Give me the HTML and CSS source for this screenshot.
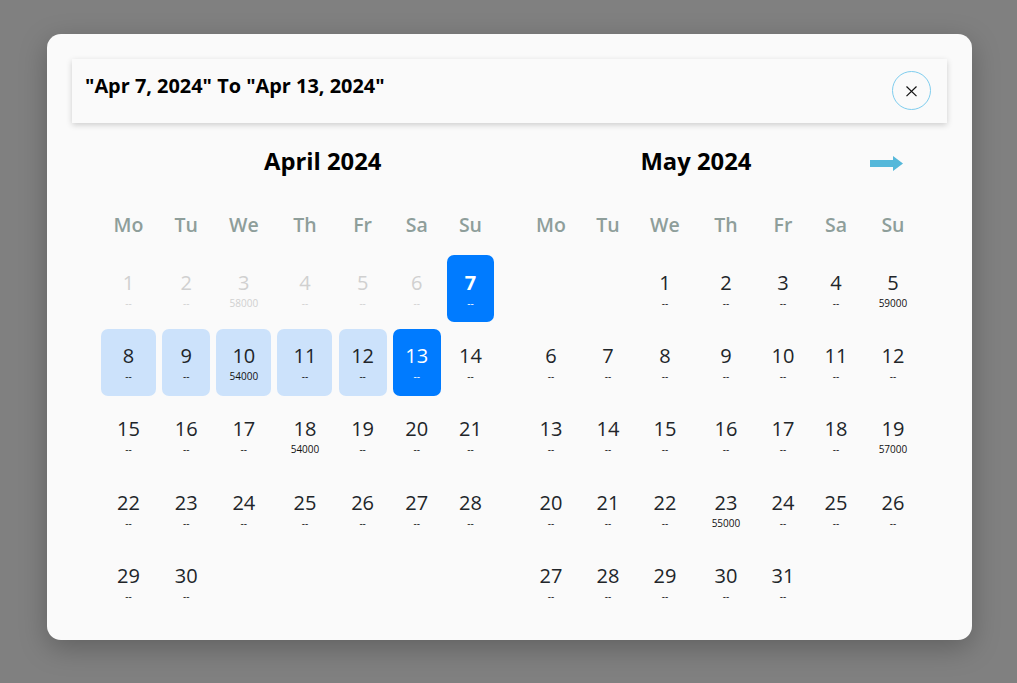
FILE: index.html
```html
<!DOCTYPE html>
<html lang="en">
  <head>
    <meta charset="UTF-8" />
    <meta name="viewport" content="width=device-width, initial-scale=1.0" />
    <title>Select dates</title>
    <link rel="stylesheet" href="styles.css">
  </head>
  <body>
    <div class="overlay">
      <div class="modal">
        <header class="modal-header">
          <h2 class="range-title">"Apr 7, 2024" To "Apr 13, 2024"</h2>
          <button class="close-btn" aria-label="Close">
            <svg width="12" height="12" viewBox="0.5 -0.3 12 12"><path d="M1 1.2 L11 10.8 M11 1.2 L1 10.8" stroke="#111" stroke-width="1.2" fill="none"/></svg>
          </button>
        </header>
        <div class="months">
          <section class="month month-left">
            <div class="month-head"><h3 class="month-title">April 2024</h3></div>
            <div class="grid">
              <div class="dow">Mo</div><div class="dow">Tu</div><div class="dow">We</div><div class="dow">Th</div><div class="dow">Fr</div><div class="dow">Sa</div><div class="dow">Su</div>

              <div class="day past"><span class="num">1</span><span class="price">--</span></div>
              <div class="day past"><span class="num">2</span><span class="price">--</span></div>
              <div class="day past"><span class="num">3</span><span class="price">58000</span></div>
              <div class="day past"><span class="num">4</span><span class="price">--</span></div>
              <div class="day past"><span class="num">5</span><span class="price">--</span></div>
              <div class="day past"><span class="num">6</span><span class="price">--</span></div>
              <div class="day start"><span class="num">7</span><span class="price">--</span></div>

              <div class="day range"><span class="num">8</span><span class="price">--</span></div>
              <div class="day range"><span class="num">9</span><span class="price">--</span></div>
              <div class="day range"><span class="num">10</span><span class="price">54000</span></div>
              <div class="day range"><span class="num">11</span><span class="price">--</span></div>
              <div class="day range"><span class="num">12</span><span class="price">--</span></div>
              <div class="day end"><span class="num">13</span><span class="price">--</span></div>
              <div class="day"><span class="num">14</span><span class="price">--</span></div>

              <div class="day"><span class="num">15</span><span class="price">--</span></div>
              <div class="day"><span class="num">16</span><span class="price">--</span></div>
              <div class="day"><span class="num">17</span><span class="price">--</span></div>
              <div class="day"><span class="num">18</span><span class="price">54000</span></div>
              <div class="day"><span class="num">19</span><span class="price">--</span></div>
              <div class="day"><span class="num">20</span><span class="price">--</span></div>
              <div class="day"><span class="num">21</span><span class="price">--</span></div>

              <div class="day"><span class="num">22</span><span class="price">--</span></div>
              <div class="day"><span class="num">23</span><span class="price">--</span></div>
              <div class="day"><span class="num">24</span><span class="price">--</span></div>
              <div class="day"><span class="num">25</span><span class="price">--</span></div>
              <div class="day"><span class="num">26</span><span class="price">--</span></div>
              <div class="day"><span class="num">27</span><span class="price">--</span></div>
              <div class="day"><span class="num">28</span><span class="price">--</span></div>

              <div class="day"><span class="num">29</span><span class="price">--</span></div>
              <div class="day"><span class="num">30</span><span class="price">--</span></div>
            </div>
          </section>

          <section class="month month-right">
            <div class="month-head">
              <h3 class="month-title">May 2024</h3>
              <svg class="next-arrow" width="33" height="15" viewBox="0 0 33 15"><path d="M0 4 H23 V0 L33 7.5 L23 15 V11 H0 Z" fill="#55b8da"/></svg>
            </div>
            <div class="grid">
              <div class="dow">Mo</div><div class="dow">Tu</div><div class="dow">We</div><div class="dow">Th</div><div class="dow">Fr</div><div class="dow">Sa</div><div class="dow">Su</div>

              <div class="day"></div>
              <div class="day"></div>
              <div class="day"><span class="num">1</span><span class="price">--</span></div>
              <div class="day"><span class="num">2</span><span class="price">--</span></div>
              <div class="day"><span class="num">3</span><span class="price">--</span></div>
              <div class="day"><span class="num">4</span><span class="price">--</span></div>
              <div class="day"><span class="num">5</span><span class="price">59000</span></div>

              <div class="day"><span class="num">6</span><span class="price">--</span></div>
              <div class="day"><span class="num">7</span><span class="price">--</span></div>
              <div class="day"><span class="num">8</span><span class="price">--</span></div>
              <div class="day"><span class="num">9</span><span class="price">--</span></div>
              <div class="day"><span class="num">10</span><span class="price">--</span></div>
              <div class="day"><span class="num">11</span><span class="price">--</span></div>
              <div class="day"><span class="num">12</span><span class="price">--</span></div>

              <div class="day"><span class="num">13</span><span class="price">--</span></div>
              <div class="day"><span class="num">14</span><span class="price">--</span></div>
              <div class="day"><span class="num">15</span><span class="price">--</span></div>
              <div class="day"><span class="num">16</span><span class="price">--</span></div>
              <div class="day"><span class="num">17</span><span class="price">--</span></div>
              <div class="day"><span class="num">18</span><span class="price">--</span></div>
              <div class="day"><span class="num">19</span><span class="price">57000</span></div>

              <div class="day"><span class="num">20</span><span class="price">--</span></div>
              <div class="day"><span class="num">21</span><span class="price">--</span></div>
              <div class="day"><span class="num">22</span><span class="price">--</span></div>
              <div class="day"><span class="num">23</span><span class="price">55000</span></div>
              <div class="day"><span class="num">24</span><span class="price">--</span></div>
              <div class="day"><span class="num">25</span><span class="price">--</span></div>
              <div class="day"><span class="num">26</span><span class="price">--</span></div>

              <div class="day"><span class="num">27</span><span class="price">--</span></div>
              <div class="day"><span class="num">28</span><span class="price">--</span></div>
              <div class="day"><span class="num">29</span><span class="price">--</span></div>
              <div class="day"><span class="num">30</span><span class="price">--</span></div>
              <div class="day"><span class="num">31</span><span class="price">--</span></div>
            </div>
          </section>
        </div>
      </div>
    </div>
  </body>
</html>
```

FILE: styles.css
```css
* {
  box-sizing: border-box;
}

html,
body {
  height: 100%;
}

body {
  margin: 0;
  font-family: "Open Sans", "Noto Sans", sans-serif;
  color: #212529;
  overflow: hidden;
}

.overlay {
  height: 100%;
  padding: 34px 45px 43px 47px;
  background-color: #808080;
}

.modal {
  height: 606px;
  padding: 25px;
  background-color: #fafafa;
  border-radius: 14px;
  box-shadow: 0 8px 28px rgba(0, 0, 0, 0.25);
}

.modal-header {
  display: flex;
  justify-content: space-between;
  align-items: flex-start;
  height: 64px;
  padding: 12px 16px 0 13px;
  box-shadow: 0 2px 6px rgba(0, 0, 0, 0.18);
}

.range-title {
  margin: 0;
  font-size: 19.9px;
  line-height: 30px;
  font-weight: 700;
  color: #000;
}

.close-btn {
  display: flex;
  align-items: center;
  justify-content: center;
  width: 39px;
  height: 39px;
  padding: 0;
  background: none;
  border: 1px solid #7fcdee;
  border-radius: 50%;
}

.months {
  display: flex;
  gap: 29.5px;
  padding-left: 29px;
}

.month-head {
  display: flex;
  align-items: center;
  height: 78px;
}

.month-title {
  margin: -2px 0 0;
  font-size: 23.8px;
  font-weight: 700;
  color: #000;
}

.month-left .month-head {
  padding-left: 163px;
}

.month-right .month-head {
  justify-content: space-between;
  padding: 0 17px 0 117px;
}

.next-arrow {
  margin-top: 2px;
}

.grid {
  display: grid;
  grid-auto-rows: 67px;
  grid-template-rows: 48.05px;
  gap: 6.25px 6.17px;
}

.month-left .grid {
  grid-template-columns: 55px 48px 55px 55px 48px 48px 47px;
}

.month-right .grid {
  grid-template-columns: 55px 47px 55px 55px 47px 47px 55px;
  column-gap: 6px;
}

.dow {
  padding-top: 1px;
  text-align: center;
  font-size: 19.5px;
  font-weight: 600;
  line-height: 46px;
  height: 46px;
  color: #8e9e9a;
}

.day {
  display: flex;
  flex-direction: column;
  align-items: center;
  padding-top: 13.6px;
  border-radius: 7px;
}

.num {
  font-size: 20px;
  line-height: 28px;
}

.price {
  font-size: 10px;
  line-height: 11px;
  margin-top: 1px;
  color: #111;
}

.past .num,
.past .price {
  color: #d0d0d0;
}

.range {
  background-color: #cce2fb;
}

.start,
.end {
  background-color: #007bff;
}

.start .num,
.start .price,
.end .num,
.end .price {
  color: #fff;
}

.start .num {
  font-weight: 700;
}
```
